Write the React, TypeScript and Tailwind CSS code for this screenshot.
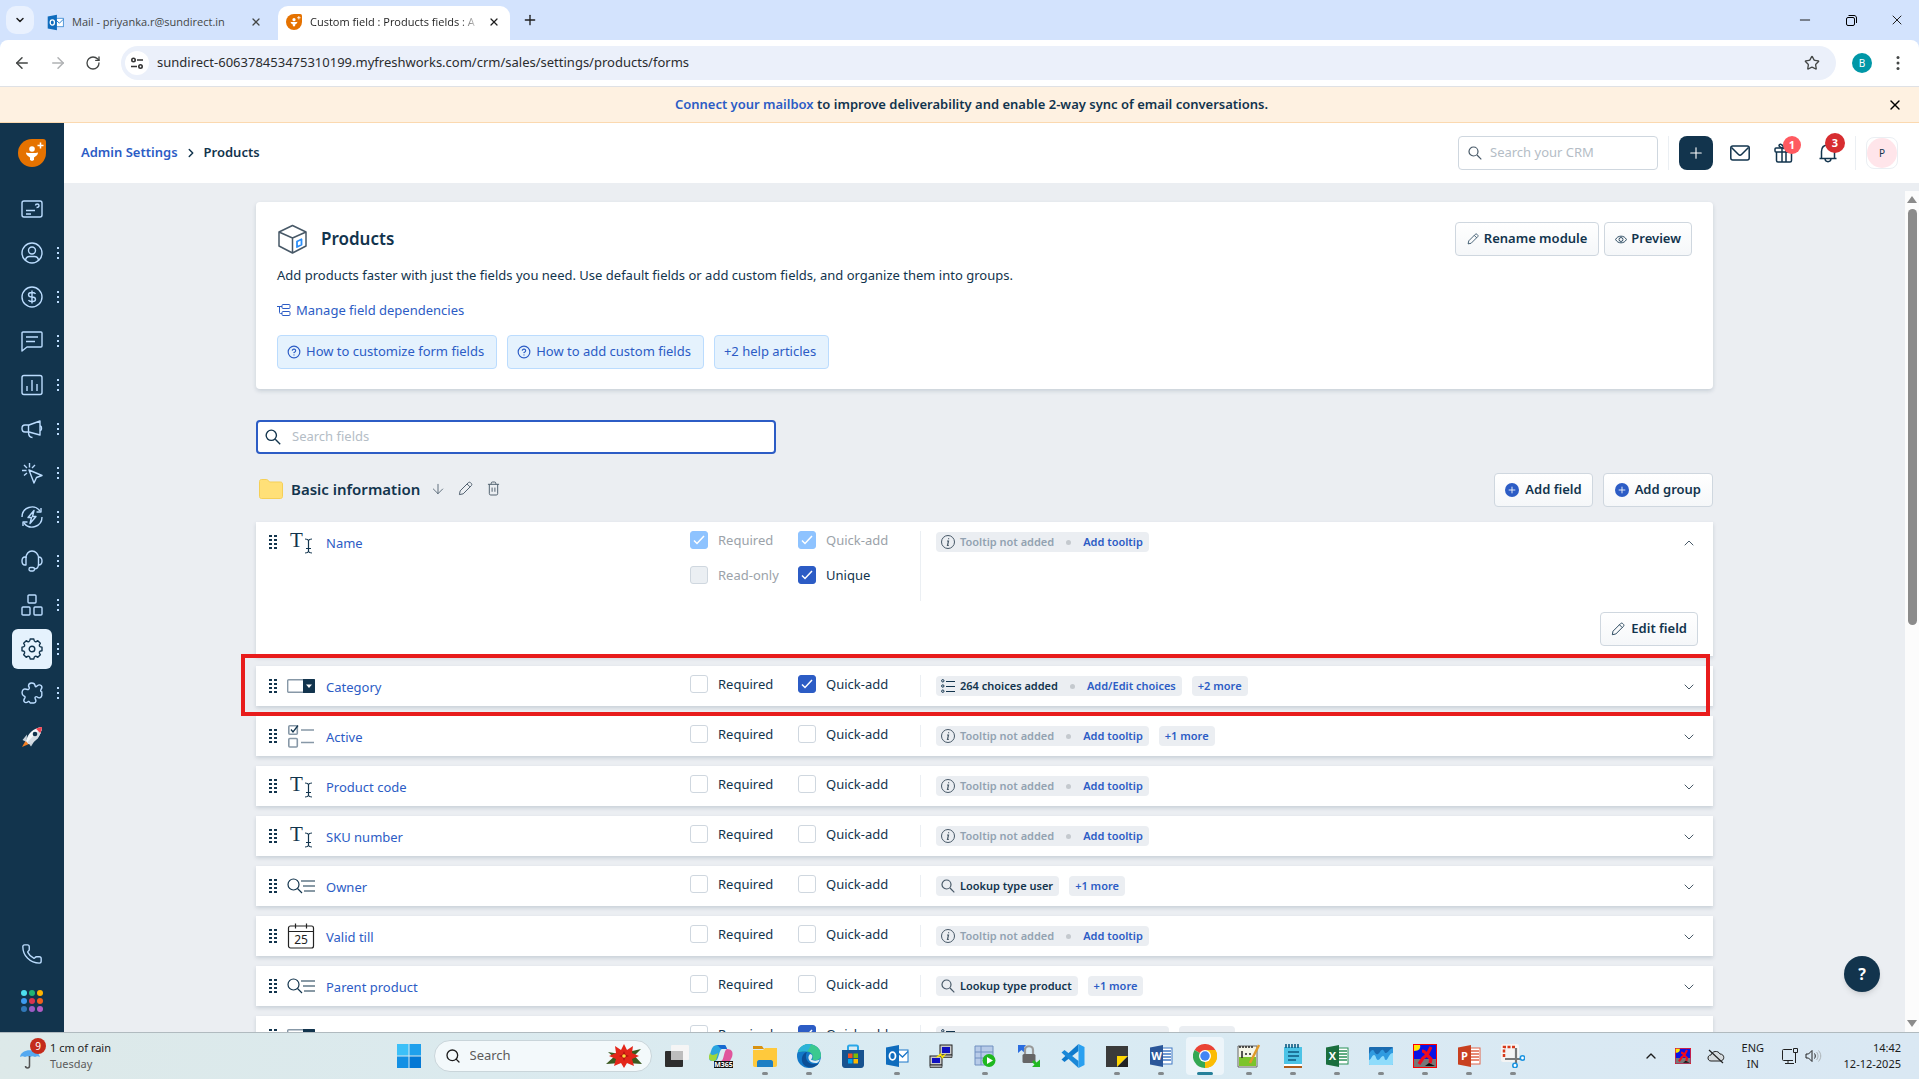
import React from 'react';
import {
  ArrowDown,
  ArrowLeft,
  ArrowRight,
  ChevronDown,
  ChevronRight,
  ChevronUp,
  CircleHelp,
  Minus,
  Phone,
  Plus,
  RotateCw,
  Search,
  Star,
  X
} from 'lucide-react';

type IconProps = { className?: string };

/* ---------- small shared icons ---------- */

function FreshLogo({ className }: IconProps) {
  return (
    <svg viewBox="0 0 28 28" className={className}>
      <path d="M14 0h11a3 3 0 0 1 3 3v11A14 14 0 1 1 14 0Z" fill="#e57200" />
      <circle cx="14" cy="10" r="2.800" fill="#fff" />
      <path d="M8 13.500c2 .8 10 .8 12 0 0 2-1.500 3.500-4 5v2.500L14 22l-2-1v-2.500c-2.500-1.500-4-3-4-5Z" fill="#fff" />
      <path d="M22.500 3.500v6M19.500 6.500h6" stroke="#fff" strokeWidth="1.500" />
    </svg>
  );
}

function OutlookIcon({ className }: IconProps) {
  return (
    <svg viewBox="0 0 24 24" className={className}>
      <rect x="11" y="6" width="12" height="12" fill="#fff" stroke="#1b76c9" />
      <path d="m12 8 5.500 5L23 7.500" fill="none" stroke="#1b76c9" strokeWidth="1.300" />
      <path d="M1 3.500 14 1v22L1 20.500Z" fill="#0f6cbd" />
      <ellipse cx="7.500" cy="12" rx="3" ry="3.800" fill="none" stroke="#fff" strokeWidth="1.800" />
    </svg>
  );
}

function SearchIcon({ className }: IconProps) {
  return (
    <svg viewBox="0 0 14 14" fill="none" stroke="currentColor" strokeWidth="1.200" className={className}>
      <circle cx="5.500" cy="5.500" r="4.500" />
      <path d="m9 9 4.300 4.300" />
    </svg>
  );
}

function EyeIcon({ className }: IconProps) {
  return (
    <svg viewBox="0 0 14 10" fill="none" stroke="currentColor" className={className}>
      <path d="M.7 5C3-.2 11-.2 13.300 5 11 10.200 3 10.200.7 5Z" />
      <circle cx="7" cy="5" r="2.300" />
    </svg>
  );
}

function PencilIcon({ className }: IconProps) {
  return (
    <svg viewBox="0 0 16 16" fill="none" stroke="currentColor" strokeLinejoin="round" className={className}>
      <path d="m1.500 14.500.8-4L11 1.800c.7-.7 1.700-.7 2.400 0l.8.8c.7.7.7 1.700 0 2.400L5.500 13.700l-4 .8ZM9.700 3.200l3.100 3.100" />
    </svg>
  );
}

function TrashIcon({ className }: IconProps) {
  return (
    <svg viewBox="0 0 14 16" fill="none" stroke="currentColor" className={className}>
      <path d="M1 3.500h12M4.500 3.500v-1c0-1 .5-1.500 1.500-1.500h2c1 0 1.500.5 1.500 1.500v1M2.500 3.500v10c0 1 .5 1.500 1.500 1.500h6c1 0 1.500-.5 1.500-1.500v-10M5.500 7v4.500M8.500 7v4.500" />
    </svg>
  );
}

function DependencyIcon({ className }: IconProps) {
  return (
    <svg viewBox="0 0 14 12" fill="none" stroke="currentColor" className={className}>
      <path d="M0 2.500h5M2.500 2.500v6c0 .7.300 1 1 1H5" />
      <rect x="5" y=".5" width="8" height="4" rx="1" />
      <rect x="5" y="7.500" width="8" height="4" rx="1" />
    </svg>
  );
}

function BoxIcon() {
  return (
    <svg viewBox="0 0 30 30" fill="none" stroke="#475867" strokeWidth="1.500" strokeLinejoin="round" className="size-[30px]">
      <path d="M15.500 1.500 29 8v14l-13.500 7L2 22V8l13.500-6.500ZM2 8l13.500 6L29 8M15.500 14v15" />
      <path d="m20 17.500 4.500-2.200v5.500L20 23v-5.500Z" stroke="#2c8ef8" strokeWidth="1.800" />
    </svg>
  );
}

function FolderIcon() {
  return (
    <svg viewBox="0 0 24 20" className="h-5 w-6">
      <path d="M.5 2.500c0-1.200.8-2 2-2h5c.8 0 1.200.3 1.700 1L10.500 3h11c1.200 0 2 .8 2 2v12.500c0 1.200-.8 2-2 2h-19c-1.200 0-2-.8-2-2v-15Z" fill="#ffe078" stroke="#f5cf57" />
    </svg>
  );
}

function DragIcon() {
  return (
    <svg viewBox="0 0 8 14" className="h-[14px] w-2" fill="#12344d">
      {[0, 4, 8, 12].map((y) => (
        <React.Fragment key={y}>
          <rect x="0" y={y} width="3" height="2" />
          <rect x="5" y={y} width="3" height="2" />
        </React.Fragment>
      ))}
    </svg>
  );
}

function InfoIcon() {
  return (
    <svg viewBox="0 0 14 14" fill="none" stroke="#475867" className="size-[14px]">
      <circle cx="7" cy="7" r="6.500" />
      <path d="M6 6h1.500l-1 4.500h1.300M7.600 3.300v1" strokeWidth="1.200" />
    </svg>
  );
}

function ListIcon() {
  return (
    <svg viewBox="0 0 14 14" fill="none" stroke="#12344d" className="size-[14px]">
      <circle cx="1.800" cy="1.800" r="1.200" />
      <circle cx="1.800" cy="7" r="1.200" />
      <circle cx="1.800" cy="12.200" r="1.200" />
      <path d="M5 2.500h9M5 7.500h9M5 12.500h9" />
    </svg>
  );
}

/* ---------- field type icons ---------- */

type FieldKind = 'text' | 'dropdown' | 'checkbox' | 'lookup' | 'date';

function FieldIcon({ kind }: { kind: FieldKind }) {
  switch (kind) {
    case 'text':
      return (
        <svg viewBox="0 0 28 24" fill="none" stroke="#12344d" className="h-6 w-7">
          <text x="3" y="17" fontSize="21" fontFamily="Liberation Serif" fill="#12344d" stroke="none">
            T
          </text>
          <path d="M18 9c2 0 3 .5 3.500 1.500C22 9.500 23 9 25 9M21.500 10.500v11M18 23c2 0 3-.5 3.500-1.500.5 1 1.500 1.500 3.500 1.500M19 18.500h5" strokeWidth="1.200" />
        </svg>
      );
    case 'dropdown':
      return (
        <svg viewBox="0 0 28 14" className="h-[14px] w-7">
          <rect x=".7" y=".7" width="26.600" height="12.600" rx="1" fill="#fff" stroke="#8798a7" strokeWidth="1.400" />
          <path d="M16 0h11c.6 0 1 .4 1 1v12c0 .6-.4 1-1 1H16Z" fill="#12344d" />
          <path d="M19 5.500h6l-3 3.500Z" fill="#fff" />
        </svg>
      );
    case 'checkbox':
      return (
        <svg viewBox="0 0 28 24" fill="none" stroke="#8798a7" strokeWidth="1.600" className="h-6 w-7">
          <rect x="1.800" y="1.800" width="8.500" height="8.500" rx="1" />
          <rect x="1.800" y="14.500" width="8.500" height="8.500" rx="1" />
          <path d="M14 6h13M14 18.500h13" />
          <path d="m4 5.500 2 2.500 5-6.500" stroke="#12344d" strokeWidth="1.300" />
        </svg>
      );
    case 'lookup':
      return (
        <svg viewBox="0 0 28 16" fill="none" stroke="#12344d" strokeWidth="1.200" className="h-4 w-7">
          <circle cx="6.500" cy="6.500" r="5.500" />
          <path d="m10.500 10.500 4.500 4.500M14 3h14M16 8h12M17 13h11" />
        </svg>
      );
    case 'date':
      return (
        <svg viewBox="0 0 28 28" fill="none" stroke="#222" strokeWidth="1.200" className="size-7">
          <rect x="1.500" y="4" width="25" height="22" rx="2" />
          <path d="M1.500 9.500h25M8.500 1.500v5M19.500 1.500v5" />
          <text x="14" y="22" textAnchor="middle" fontSize="12" fontFamily="Noto Sans" fill="#222" stroke="none">
            25
          </text>
        </svg>
      );
  }
}

/* ---------- form controls ---------- */

type CheckProps = { label: string; checked?: boolean; disabled?: boolean };

function Check({ label, checked = false, disabled = false }: CheckProps) {
  return (
    <label className="flex h-[18px] items-center gap-[10px] text-[13px] text-[#12344d] has-disabled:text-[#9ba2a9]">
      <span className="grid size-[18px] place-items-center">
        <input
          type="checkbox"
          defaultChecked={checked}
          disabled={disabled}
          className="peer col-start-1 row-start-1 size-[18px] appearance-none rounded-[3px] border border-[#cfd7df] bg-white checked:border-[#2c5cc5] checked:bg-[#2c5cc5] disabled:bg-[#ebeff3] disabled:checked:border-[#8ec3ff] disabled:checked:bg-[#8ec3ff]"
        />
        <svg viewBox="0 0 14 14" className="pointer-events-none col-start-1 row-start-1 hidden size-[14px] peer-checked:block" fill="none" stroke="#fff" strokeWidth="1.500">
          <path d="m2 7.500 3 3L12 3" />
        </svg>
      </span>
      <span className="pt-[2px]">{label}</span>
    </label>
  );
}

function Button({ children, className = '' }: { children: React.ReactNode; className?: string }) {
  return (
    <button
      className={`flex h-[34px] items-center rounded-[4px] border border-[#cfd7df] bg-linear-to-b from-white to-[#f5f7f9] text-[13px] font-semibold whitespace-nowrap text-[#12344d] ${className}`}
    >
      {children}
    </button>
  );
}

function AddBadge() {
  return (
    <span className="grid size-[14px] place-items-center rounded-full bg-[#2c5cc5] text-white">
      <Plus className="size-[10px]" />
    </span>
  );
}

/* ---------- field rows ---------- */

type Field = {
  name: string;
  kind: FieldKind;
  chip: 'tooltip' | 'choices' | 'lookup';
  chipText?: string;
  more?: string;
  quickAdd?: boolean;
  highlighted?: boolean;
};

const fields: Field[] = [
  { name: 'Category', kind: 'dropdown', chip: 'choices', chipText: '264 choices added', more: '+2 more', quickAdd: true, highlighted: true },
  { name: 'Active', kind: 'checkbox', chip: 'tooltip', more: '+1 more' },
  { name: 'Product code', kind: 'text', chip: 'tooltip' },
  { name: 'SKU number', kind: 'text', chip: 'tooltip' },
  { name: 'Owner', kind: 'lookup', chip: 'lookup', chipText: 'Lookup type user', more: '+1 more' },
  { name: 'Valid till', kind: 'date', chip: 'tooltip' },
  { name: 'Parent product', kind: 'lookup', chip: 'lookup', chipText: 'Lookup type product', more: '+1 more' },
  { name: 'Pricing type', kind: 'dropdown', chip: 'choices', chipText: '2 choices added', more: '+2 more', quickAdd: true }
];

function Chips({ chip, chipText, more }: Pick<Field, 'chip' | 'chipText' | 'more'>) {
  return (
    <div className="flex h-5 gap-[10px] text-[11px] font-semibold whitespace-nowrap">
      <div className="flex items-center rounded-[4px] bg-[#ebeef2] pr-[6px] pl-[5px]">
        {chip === 'tooltip' && <InfoIcon />}
        {chip === 'choices' && <ListIcon />}
        {chip === 'lookup' && <SearchIcon className="size-[14px] text-[#475867]" />}
        <span className={chip === 'tooltip' ? 'ml-[5px] text-[#92a2b1]' : 'ml-[5px] text-[#12344d]'}>
          {chip === 'tooltip' ? 'Tooltip not added' : chipText}
        </span>
        {chip !== 'lookup' && (
          <>
            <span className="mx-3 size-[5px] rounded-full bg-[#c4c9ce]" />
            <a href="#" className="text-[#2c5cc5]">
              {chip === 'tooltip' ? 'Add tooltip' : 'Add/Edit choices'}
            </a>
          </>
        )}
      </div>
      {more && <button className="rounded-[4px] bg-[#ebeef2] px-[6px] text-[#2c5cc5]">{more}</button>}
    </div>
  );
}

function FieldName({ name, kind }: Pick<Field, 'name' | 'kind'>) {
  return (
    <div className="flex h-10 items-center pl-[13px]">
      <DragIcon />
      <span className="mr-[11px] ml-[10px] flex w-7 justify-center">
        <FieldIcon kind={kind} />
      </span>
      <a href="#" className="pt-[3px] text-[13px] text-[#2c5cc5]">
        {name}
      </a>
    </div>
  );
}

const rowGrid = 'grid grid-cols-[434px_230px_1fr_auto] items-start';
const rowCard = 'bg-white shadow-[0_2px_4px_rgba(18,52,77,0.16)]';

function FieldRow({ field }: { field: Field }) {
  return (
    <li className={`relative ${rowCard}`}>
      <div className={rowGrid}>
        <FieldName name={field.name} kind={field.kind} />
        <div className="grid grid-cols-[108px_1fr] pt-[9px]">
          <Check label="Required" />
          <Check label="Quick-add" checked={field.quickAdd} />
        </div>
        <div className="mt-[9px] h-[22px] border-l border-[#ebeff3] pt-px pl-[15px]">
          <Chips chip={field.chip} chipText={field.chipText} more={field.more} />
        </div>
        <button aria-label={`Expand ${field.name}`} className="mt-[13px] mr-4 text-[#475867]">
          <ChevronDown className="size-4" strokeWidth={1.5} />
        </button>
      </div>
      {field.highlighted && (
        <div className="pointer-events-none absolute -top-3 right-[3px] -bottom-[10px] -left-[15px] z-10 border-4 border-[#e81c1c]" />
      )}
    </li>
  );
}

function NameRow() {
  return (
    <li className={rowCard}>
      <div className={rowGrid}>
        <FieldName name="Name" kind="text" />
        <div className="grid grid-cols-[108px_1fr] gap-y-[17px] pt-[9px]">
          <Check label="Required" checked disabled />
          <Check label="Quick-add" checked disabled />
          <Check label="Read-only" disabled />
          <Check label="Unique" checked />
        </div>
        <div className="mt-[9px] h-[70px] border-l border-[#ebeff3] pt-px pl-[15px]">
          <Chips chip="tooltip" />
        </div>
        <button aria-label="Collapse Name" className="mt-[13px] mr-4 text-[#475867]">
          <ChevronUp className="size-4" strokeWidth={1.5} />
        </button>
      </div>
      <div className="flex justify-end pt-[11px] pr-[15px] pb-[10px]">
        <Button className="gap-[6px] px-[10px]">
          <PencilIcon className="size-[14px]" />
          Edit field
        </Button>
      </div>
    </li>
  );
}

/* ---------- browser chrome ---------- */

function TabStrip() {
  return (
    <div className="flex h-10 items-end bg-[#d3e3fd] font-['Open_Sans',sans-serif] text-[11px] text-[#1f1f1f]">
      <button aria-label="Search tabs" className="mb-[6px] ml-[6px] grid size-7 place-items-center rounded-[10px] bg-[#e9f1fe]">
        <ChevronDown className="size-3" strokeWidth={3} />
      </button>
      <div className="ml-3 flex h-[34px] w-[224px] items-center gap-2 pb-[2px] text-[#444746]">
        <OutlookIcon className="ml-px size-[17px]" />
        <span className="flex-1 whitespace-nowrap">Mail - priyanka.r@sundirect.in</span>
        <button aria-label="Close Mail tab" className="mr-2">
          <X className="size-3" strokeWidth={2.5} />
        </button>
      </div>
      <div className="ml-2 flex h-[34px] w-[232px] items-center gap-2 rounded-t-[10px] bg-white px-2 pb-[2px]">
        <FreshLogo className="size-4 shrink-0" />
        <span className="min-w-0 flex-1 overflow-hidden mask-[linear-gradient(to_right,black_88%,transparent)] whitespace-nowrap">
          Custom field : Products fields : A
        </span>
        <button aria-label="Close Custom field tab" className="mr-[2px]">
          <X className="size-3" strokeWidth={2.5} />
        </button>
      </div>
      <button aria-label="New tab" className="mb-3 ml-3">
        <Plus className="size-4" />
      </button>
      <div className="mb-3 ml-auto flex items-center gap-[30px] pr-[14px]">
        <button aria-label="Minimize">
          <Minus className="size-4" strokeWidth={1.5} />
        </button>
        <button aria-label="Restore">
          <svg viewBox="0 0 16 16" className="size-4" fill="none" stroke="#000">
            <rect x="3.500" y="5.500" width="8" height="8" rx="1.500" />
            <path d="M5.500 3.500h5.500c1.500 0 2.500 1 2.500 2.500V11" />
          </svg>
        </button>
        <button aria-label="Close window">
          <X className="size-4" strokeWidth={1.5} />
        </button>
      </div>
    </div>
  );
}

function AddressBar() {
  return (
    <div className="bg-[#d3e3fd]">
      <div className="flex h-[46px] items-center rounded-t-lg bg-white text-[#444746]">
        <button aria-label="Back" className="ml-[13px]">
          <ArrowLeft className="size-[18px]" />
        </button>
        <button aria-label="Forward" className="ml-[18px] text-[#b0b2b4]">
          <ArrowRight className="size-[18px]" />
        </button>
        <button aria-label="Reload" className="ml-[18px]">
          <RotateCw className="size-4" />
        </button>
        <div className="ml-5 flex h-[34px] flex-1 items-center rounded-full bg-[#ebf0fa] pr-4 pl-1">
          <span className="grid size-6 place-items-center rounded-full bg-white">
            <svg viewBox="0 0 14 14" className="size-[14px]" fill="none" stroke="#333" strokeWidth="1.600">
              <circle cx="3.500" cy="4" r="1.700" />
              <circle cx="10.500" cy="10.500" r="1.700" />
              <path d="M7 4h6M1 10.500h6" />
            </svg>
          </span>
          <input
            aria-label="Address"
            defaultValue="sundirect-606378453475310199.myfreshworks.com/crm/sales/settings/products/forms"
            className="ml-2 flex-1 bg-transparent text-[13px] text-[#2a2c2e] outline-none"
          />
          <button aria-label="Bookmark">
            <Star className="size-4" />
          </button>
        </div>
        <span className="ml-4 grid size-5 place-items-center rounded-full bg-[#0097a7] text-[10px] text-white">B</span>
        <button aria-label="Browser menu" className="mr-[13px] ml-[18px]">
          <svg viewBox="0 0 16 16" className="size-4" fill="#444746">
            <circle cx="8" cy="2.500" r="1.500" />
            <circle cx="8" cy="8" r="1.500" />
            <circle cx="8" cy="13.500" r="1.500" />
          </svg>
        </button>
      </div>
    </div>
  );
}

/* ---------- app shell ---------- */

const navItems = [
  { label: 'Activities', menu: false, paths: ['M4 4h16c1.200 0 2 .8 2 2v12c0 1.200-.8 2-2 2H4c-1.200 0-2-.8-2-2V6c0-1.200.8-2 2-2Z', 'M6 13.500h9M6 17h5M15.500 8.500c0-2 3.500-2 3.500 0s-2.500 2-2.500 2'] },
  { label: 'Contacts', menu: true, paths: ['M12 2a10 10 0 1 0 0 20 10 10 0 0 0 0-20Z', 'M12 6a3.500 3.500 0 1 0 0 7 3.500 3.500 0 0 0 0-7Z', 'M5.500 19c.5-2.500 2-3.500 4-3.500h5c2 0 3.500 1 4 3.500'] },
  { label: 'Deals', menu: true, paths: ['M12 2a10 10 0 1 0 0 20 10 10 0 0 0 0-20Z', 'M15.500 9c-.5-1-1.500-1.500-3-1.500h-1c-1.500 0-3 .7-3 2.200S9.500 12 12 12s3.500.8 3.500 2.300-1.500 2.200-3 2.200h-1c-1.500 0-2.500-.5-3-1.500M12 5.500v13'] },
  { label: 'Conversations', menu: true, paths: ['M2 4c0-.6.4-1 1-1h18c.6 0 1 .4 1 1v13c0 .6-.4 1-1 1H7l-5 4Z', 'M6 8h12M6 12.500h9'] },
  { label: 'Reports', menu: true, paths: ['M4 2.500h16c1.200 0 2 .8 2 2v15c0 1.200-.8 2-2 2H4c-1.200 0-2-.8-2-2v-15c0-1.200.8-2 2-2Z', 'M7 13v5M12 7v11M17 11v7'] },
  { label: 'Marketing', menu: true, paths: ['M9 8H5c-2 0-3 1.500-3 3.500S3 15 5 15h4l11 3V4L9 8Z', 'M8.500 8v7M8.500 15c0 3 1 5.500 4 5.500M20 9c2 0 2 4.500 0 4.500'] },
  { label: 'Campaigns', menu: true, paths: ['m9 9 13 5.500-5.500 2L14 22Z', 'M9.500 2v4.500M2 9.500h4.500M4 4l3 3M15 4l-3 3M4 14.500l3-2.500'] },
  { label: 'Automations', menu: true, paths: ['M2 12A10 10 0 0 1 20 6M22 12A10 10 0 0 1 4 18', 'M21 3v4h-4.500M3 21v-4h4.500', 'm14 5.500-6 7h3.500l-1.500 6 6-7h-3.500Z'] },
  { label: 'Support', menu: true, paths: ['M6 9c0-4 2.500-7 6-7s6.500 3 6.500 7v6c0 3-1.500 5-4 5', 'M6 8H5C3 8 2 9.500 2 12s1 4 3 4h1ZM18.500 8c2 0 3.500 1.500 3.500 4s-1.500 4-3.500 4', 'M10.500 18.500h2.500c2 0 2 3.500 0 3.500h-2.500c-2 0-2-3.500 0-3.500Z'] },
  { label: 'Modules', menu: true, paths: ['M9 2h6c.6 0 1 .4 1 1v6c0 .6-.4 1-1 1H9c-.6 0-1-.4-1-1V3c0-.6.4-1 1-1Z', 'M3 14h6c.6 0 1 .4 1 1v6c0 .6-.4 1-1 1H3c-.6 0-1-.4-1-1v-6c0-.6.4-1 1-1Z', 'M15 14h6c.6 0 1 .4 1 1v6c0 .6-.4 1-1 1h-6c-.6 0-1-.4-1-1v-6c0-.6.4-1 1-1Z'] },
  { label: 'Admin Settings', menu: true, active: true, paths: ['M10.200 2h3.600Q14.300 6.400 17.800 3.660L20.340 6.200Q17.600 9.700 22 10.200v3.600Q17.600 14.300 20.340 17.800L17.800 20.340Q14.300 17.600 13.800 22h-3.600Q9.700 17.600 6.200 20.340L3.660 17.800Q6.400 14.300 2 13.800v-3.600Q6.400 9.700 3.660 6.200L6.200 3.660Q9.700 6.400 10.200 2Z', 'M12 9.200a2.800 2.800 0 1 0 0 5.600 2.800 2.800 0 0 0 0-5.600Z'] },
  { label: 'Marketplace', menu: true, paths: ['M8.500 5c0-4 6-4 6.500-.5.3 1.500 1 1.500 2 .5 3-2.500 6.500 0 4 3.500-.8 1-.3 2 .8 2.500v3.500c-.5 2.500-3 3-4.500 1.500-1.500-1-3 .5-2 2s1 3.500-1.500 4h-3.500c-.8-.5-.8-2-2-1.500-3 2.500-6 0-3.500-3.500.8-1.200 0-2-1-2-2.500-1.500-2-5-.5-6.500 2-1.500 3.500.5 5 0s1.200-2 .2-3.500Z'] }
];

function Rocket() {
  return (
    <svg viewBox="0 0 24 24" className="size-6">
      <path d="m6 15-4 7 7-3Z" fill="#f48024" />
      <path d="M7 9.500 2.500 15l4 2ZM14.500 16 11 21.500l-3-4Z" fill="#c9d2da" />
      <path d="M6 16C7.500 9 13 3 22 2c-1 9-6 15-13.500 17Z" fill="#f4f7fa" />
      <path d="M22 2C21 11 16 17 8.500 19L7 17.500Z" fill="#d5dde4" />
      <path d="M22 2c-2 .2-4.500 1-6 1.800l4.200 4.200C21.500 6 21.800 4 22 2Z" fill="#f2414f" />
      <circle cx="15" cy="9" r="2.300" fill="#12344d" />
    </svg>
  );
}

const appColors = ['#4de0f0', '#22b573', '#ffb400', '#3d9bf0', '#d9334f', '#f2601d', '#3178b8', '#9a5cc4', '#b45cc4'];

function Sidebar() {
  return (
    <nav className="flex w-16 shrink-0 flex-col bg-[#12344d] text-[#bbdcfe]">
      <a href="#" aria-label="Home" className="mt-4 mb-5 flex justify-center">
        <FreshLogo className="size-7" />
      </a>
      <ul>
        {navItems.map((item) => (
          <li key={item.label} className="flex h-11 items-center">
            <a
              href="#"
              aria-label={item.label}
              className={`ml-3 grid size-10 place-items-center rounded-md ${item.active ? 'bg-[#e5f2fd] text-[#12344d]' : ''}`}
            >
              <svg viewBox="0 0 24 24" className="size-6" fill="none" stroke="currentColor" strokeWidth="1.400" strokeLinejoin="round">
                {item.paths.map((d) => (
                  <path key={d} d={d} />
                ))}
              </svg>
            </a>
            {item.menu && (
              <svg viewBox="0 0 2 12" className="ml-[5px] h-3 w-[2px]" fill="#bbdcfe">
                <rect width="2" height="2" />
                <rect y="5" width="2" height="2" />
                <rect y="10" width="2" height="2" />
              </svg>
            )}
          </li>
        ))}
        <li className="flex h-11 items-center justify-center">
          <a href="#" aria-label="Get started">
            <Rocket />
          </a>
        </li>
      </ul>
      <a href="#" aria-label="Phone" className="mt-auto flex justify-center">
        <Phone className="size-[22px]" strokeWidth={1.5} />
      </a>
      <a href="#" aria-label="Switch app" className="mt-[25px] mb-[20px] flex justify-center">
        <span className="grid grid-cols-3 gap-[2px]">
          {appColors.map((color) => (
            <span key={color} className="size-[6px] rounded-full" style={{ backgroundColor: color }} />
          ))}
        </span>
      </a>
    </nav>
  );
}

function Header() {
  return (
    <header className="flex h-[60px] shrink-0 items-center bg-white pr-[21px] pl-[17px] text-[#12344d]">
      <div className="flex items-center text-[13px] font-semibold">
        <a href="#" className="text-[#2c5cc5]">
          Admin Settings
        </a>
        <ChevronRight className="mx-[6px] size-[14px]" strokeWidth={2.5} />
        <span>Products</span>
      </div>
      <label className="ml-auto flex h-[34px] w-[200px] items-center gap-2 rounded-[4px] border border-[#cfd7df] px-[9px]">
        <SearchIcon className="size-[14px] shrink-0 text-[#475867]" />
        <input
          type="search"
          aria-label="Search your CRM"
          placeholder="Search your CRM"
          className="min-w-0 flex-1 text-[13px] outline-none placeholder:text-[#b4bdc6]"
        />
      </label>
      <span className="mx-[10px] h-[34px] w-px bg-[#ebeff3]" />
      <button aria-label="Add" className="grid size-[34px] place-items-center rounded-lg bg-[#12344d] text-white">
        <Plus className="size-[18px]" strokeWidth={1.5} />
      </button>
      <button aria-label="Mail" className="ml-[17px]">
        <svg viewBox="0 0 20 16" className="h-4 w-5" fill="none" stroke="currentColor" strokeWidth="1.500" strokeLinejoin="round">
          <rect x=".8" y="1" width="18.400" height="14" rx="2" />
          <path d="m1.500 2.500 7 7c1 1 2 1 3 0l7-7" />
        </svg>
      </button>
      <button aria-label="Rewards" className="relative ml-6">
        <svg viewBox="0 0 20 20" className="size-5" fill="none" stroke="currentColor" strokeWidth="1.500">
          <rect x="1" y="5" width="18" height="4" rx="1" />
          <path d="M2.500 9v8.500c0 1 .5 1.500 1.500 1.500h12c1 0 1.500-.5 1.500-1.500V9M8 5v14M12 5v14M10 5C8 5 5 4 5 2.500S8 0 10 5c2-5 5-4 5-2.500S12 5 10 5Z" />
        </svg>
        <span className="absolute -top-[7px] left-[9px] grid size-[18px] place-items-center rounded-full bg-[#ff5a60] text-[11px] font-bold text-white">1</span>
      </button>
      <button aria-label="Notifications" className="relative ml-6">
        <svg viewBox="0 0 20 20" className="size-5" fill="none" stroke="currentColor" strokeWidth="1.500">
          <path d="M1.500 15.500h17M3.500 15.500V8.500C3.500 4.500 6 2 10 2s6.500 2.500 6.500 6.500v7M7 16c.5 3.500 5.500 3.500 6 0" />
        </svg>
        <span className="absolute -top-[10px] left-[7px] grid size-5 place-items-center rounded-full bg-[#d72d30] text-[11px] font-bold text-white">3</span>
      </button>
      <span className="mr-[10px] ml-[17px] h-[34px] w-px bg-[#ebeff3]" />
      <button className="grid size-8 place-items-center rounded-lg border border-[#ebeff3]">
        <span className="grid size-[30px] place-items-center rounded-full bg-[#ffe5ea] text-[10px]">P</span>
      </button>
    </header>
  );
}

const helpLink = 'flex h-[34px] items-center gap-[5px] rounded-[4px] border border-[#bbdcfe] bg-[#e5f2fd] pr-3 pl-[9px]';

function ModuleCard() {
  return (
    <section className="rounded-[4px] bg-white px-[21px] py-5 text-[13px] shadow-[0_2px_4px_rgba(18,52,77,0.16)]">
      <div className="flex items-center">
        <BoxIcon />
        <h1 className="ml-[14px] text-[17px] font-semibold">Products</h1>
        <Button className="ml-auto gap-[5px] px-[11px]">
          <PencilIcon className="size-3" />
          Rename module
        </Button>
        <Button className="ml-[5px] gap-1 px-[10px]">
          <EyeIcon className="h-[9px] w-3" />
          Preview
        </Button>
      </div>
      <p className="mt-[9px] mb-[15px] leading-5">
        Add products faster with just the fields you need. Use default fields or add custom fields, and organize them into groups.
      </p>
      <a href="#" className="flex items-center gap-[5px] leading-5 text-[#2c5cc5]">
        <DependencyIcon className="h-3 w-[14px]" />
        Manage field dependencies
      </a>
      <div className="mt-[15px] flex gap-[10px] text-[#2c5cc5]">
        <a href="#" className={helpLink}>
          <CircleHelp className="size-[14px]" />
          How to customize form fields
        </a>
        <a href="#" className={helpLink}>
          <CircleHelp className="size-[14px]" />
          How to add custom fields
        </a>
        <button className={helpLink}>+2 help articles</button>
      </div>
    </section>
  );
}

function Content() {
  return (
    <main className="min-w-0 flex-1 overflow-hidden px-6 pt-[19px]">
      <div className="mx-auto max-w-[1457px]">
        <ModuleCard />
        <label className="mt-[31px] flex h-[34px] w-[520px] items-center gap-[11px] rounded-[4px] border-2 border-[#2c5cc5] bg-white px-[7px]">
          <SearchIcon className="size-4 text-[#12344d]" />
          <input aria-label="Search fields" placeholder="Search fields" className="flex-1 text-[13px] outline-none placeholder:text-[#b4bdc6]" />
        </label>
        <div className="mt-[19px] flex items-center pl-[3px] text-[#475867]">
          <div className="flex items-center pb-[3px]">
            <FolderIcon />
            <h2 className="ml-2 text-[15px] leading-5 font-semibold text-[#12344d]">Basic information</h2>
            <button aria-label="Move down" className="ml-[10px]">
              <ArrowDown className="size-4" strokeWidth={1.25} />
            </button>
            <button aria-label="Rename group" className="ml-3">
              <PencilIcon className="size-[15px]" />
            </button>
            <button aria-label="Delete group" className="ml-[14px]">
              <TrashIcon className="h-[15px] w-[13px]" />
            </button>
          </div>
          <Button className="ml-auto gap-[6px] px-[10px]">
            <AddBadge />
            Add field
          </Button>
          <Button className="ml-[10px] gap-[6px] px-[11px]">
            <AddBadge />
            Add group
          </Button>
        </div>
        <ul className="mt-[15px] flex flex-col gap-[10px]">
          <NameRow />
          {fields.map((field) => (
            <FieldRow key={field.name} field={field} />
          ))}
        </ul>
      </div>
    </main>
  );
}

function Scrollbar() {
  return (
    <div className="mt-2 flex w-[14px] shrink-0 flex-col items-center bg-[#fcfcfc] pt-[5px] pb-1">
      <svg viewBox="0 0 10 8" className="h-2 w-[10px]" fill="#8b8b8b">
        <path d="M5 0 10 7H0Z" />
      </svg>
      <div className="mt-[5px] h-[50%] w-[9px] rounded-full bg-[#8b8b8b]" />
      <svg viewBox="0 0 10 8" className="mt-auto h-2 w-[10px]" fill="#8b8b8b">
        <path d="M5 7 10 0H0Z" />
      </svg>
    </div>
  );
}

/* ---------- taskbar ---------- */

function RunnerArt() {
  return (
    <>
      <rect x=".5" y=".5" width="23" height="23" fill="#0a14e6" stroke="#f00" />
      <path d="M1 15h22v8H1Z" fill="#777" />
      <path d="M1 1h6c1 3-1 6-6 6Z" fill="#ffe600" />
      <path d="M12 22h10l-6-3Z" fill="#111" />
      <path d="M9 7c3 0 4 2 5 4l4 4-1 4M18 3l-4 8-4 3-4 6" fill="none" stroke="#f00b1c" strokeWidth="3.200" />
    </>
  );
}

function OfficeArt({ letter, color, dark }: { letter: string; color: string; dark: string }) {
  return (
    <>
      <rect x="11" y="4" width="12" height="16" fill="#fff" stroke={color} />
      <path d="M14 7h8M14 10h8M14 13h8M14 16h8" stroke={color} strokeWidth="1.300" />
      <path d="M1 3.500 14 1v22L1 20.500Z" fill={dark} />
      <text x="7.500" y="16" textAnchor="middle" fontSize="11" fontWeight="700" fontFamily="Open Sans" fill="#fff">
        {letter}
      </text>
    </>
  );
}

const taskbarApps: { label: string; running?: boolean; active?: boolean; art: React.ReactNode }[] = [
  {
    label: 'Task View',
    art: (
      <>
        <rect x="0" y="7" width="18" height="16" rx="1" fill="#2d2d2d" />
        <rect x="6" y="1" width="18" height="15" rx="1" fill="#f5f5f5" />
        <rect x="6" y="7" width="12" height="9" fill="#bdbdbd" />
      </>
    )
  },
  {
    label: 'Microsoft 365 Copilot',
    art: (
      <>
        <path d="M8 1h7c2 0 2 2 3 4h-5c-3 0-3 12-7 12H3c-5 0-2-6-1-10 1-4 3-6 6-6Z" fill="#2aa5e0" />
        <path d="M1 9c1 3 5 2 8 0l-2 7c-3 2-8 1-7-4Z" fill="#9fd63c" />
        <path d="M13 5h4c4 0 8 1 6 8l-2 4h-9c3 0 3-12 6-12Z" fill="#e0559c" />
        <path d="M8 1h7c2 0 2 2 3 4h-5c-2 0-3-3-5-4Z" fill="#1769d1" />
        <rect x="5" y="17" width="19" height="7" fill="#111" />
        <text x="14.500" y="23" textAnchor="middle" fontSize="7" fontWeight="700" fontFamily="Open Sans" fill="#fff">
          M365
        </text>
      </>
    )
  },
  {
    label: 'File Explorer',
    running: true,
    art: (
      <>
        <path d="M0 2h9l2 3H0Z" fill="#d9920f" />
        <path d="M0 6h10l2-2h12v17c0 1-.5 2-2 2H2c-1.500 0-2-1-2-2Z" fill="#ffc93c" />
        <path d="M4 23v-5c0-1 1-2 2-2h12c1 0 2 1 2 2v5Z" fill="#1d7fc4" />
      </>
    )
  },
  {
    label: 'Edge',
    running: true,
    art: (
      <>
        <circle cx="12" cy="12" r="12" fill="#1278c8" />
        <path d="M1 8C3 2 9-1 15 .500c6 1.500 9 6 9 11 0 4-5 6-9 4 2-2 1-7-5-8-4-.5-7 .5-9 .5Z" fill="#3bc98f" />
        <path d="M1 8C3 2 9-1 14 .300c-1 3-2 5-4 7.200-4-.5-7 .5-9 .5Z" fill="#2bb3d9" />
        <path d="M10 8c-3 5 0 13 9 12 1 0 2-1 3-1-3 5-11 6-15 2S5 9 10 8Z" fill="#0c4f96" />
        <path d="M13 10c3 0 3 4 1 5.500 2 1.500 6 1.500 9 0-1 2-2 3-3 3.500-7 1-11-5-7-9Z" fill="#d9ebf3" />
      </>
    )
  },
  {
    label: 'Microsoft Store',
    art: (
      <>
        <path d="M7 7V3c0-1 .5-1.500 1.500-1.500h7c1 0 1.500.5 1.500 1.500v4" fill="none" stroke="#2aa7e8" strokeWidth="2" />
        <path d="M1 6h22v15c0 1.500-1 3-3 3H4c-2 0-3-1.500-3-3Z" fill="#17528f" />
        <rect x="7" y="9.500" width="4.500" height="4.500" fill="#f25022" />
        <rect x="12.500" y="9.500" width="4.500" height="4.500" fill="#7fba00" />
        <rect x="7" y="15" width="4.500" height="4.500" fill="#00a4ef" />
        <rect x="12.500" y="15" width="4.500" height="4.500" fill="#ffb900" />
      </>
    )
  },
  { label: 'Outlook', running: true, art: <OutlookIcon /> },
  {
    label: 'PuTTY',
    art: (
      <>
        <rect x="11" y="1" width="12" height="10" fill="#c9c9c9" stroke="#222" />
        <rect x="13" y="3" width="8" height="6" fill="#1010c0" />
        <rect x="1" y="12" width="12" height="9" fill="#c9c9c9" stroke="#222" />
        <rect x="3" y="14" width="8" height="5" fill="#1010c0" />
        <path d="M1 21h12v2.500H1ZM12 11h11v2.500H12Z" fill="#aaa" stroke="#222" strokeWidth=".7" />
        <path d="m6 14 6-5 1 3 5-3-5 6-1-3Z" fill="#ffe600" />
      </>
    )
  },
  {
    label: 'Database Runner',
    running: true,
    art: (
      <>
        <path d="M2 2h18v19H2Z" fill="#b7cbe8" stroke="#7090c0" />
        <path d="M2 8h18M2 14h18M8 2v19" stroke="#7090c0" />
        <circle cx="16" cy="16.500" r="6.500" fill="#1fb81f" />
        <path d="m14 13 6 3.500-6 3.500Z" fill="#fff" />
      </>
    )
  },
  {
    label: 'WinSCP',
    art: (
      <>
        <path d="M1 1h8L7 3.500l2 2-2.500 2.500-2-2L1 9Z" fill="#2a6de0" />
        <path d="M8 11V6c0-5 8-5 8 0v5" fill="none" stroke="#9a9a9a" strokeWidth="2.200" />
        <rect x="5.500" y="10" width="13" height="9" rx="1.500" fill="#666" />
        <path d="M23 23h-8l2.500-2.500-2.500-2.500 2-2 2.500 2.500 3.500-3Z" fill="#22b822" />
      </>
    )
  },
  {
    label: 'Visual Studio Code',
    art: (
      <>
        <path d="M17.500 0v7L3.500 18 .500 15.500Z" fill="#0f7acc" />
        <path d="M17.500 24v-7L3.500 6 .500 8.500Z" fill="#1a88d8" />
        <path d="m17.500 0 6 3v18l-6 3Z" fill="#2aa0f0" />
      </>
    )
  },
  {
    label: 'Sticky Notes',
    running: true,
    art: (
      <>
        <path d="M1 2h22v10H12v11H1Z" fill="#3a3a3a" />
        <path d="M12 12h11L12 23Z" fill="#ffd600" />
        <path d="M23 12v11H12Z" fill="#222" />
      </>
    )
  },
  { label: 'Word', running: true, art: <OfficeArt letter="W" color="#4178c4" dark="#2a5699" /> },
  {
    label: 'Chrome',
    active: true,
    art: (
      <>
        <path d="M12 12 1.600 6A12 12 0 0 1 22.400 6Z" fill="#ea4335" />
        <path d="M12 12 22.400 6A12 12 0 0 1 12 24Z" fill="#fbbc04" />
        <path d="M12 12 12 24A12 12 0 0 1 1.600 6Z" fill="#34a853" />
        <path d="M12 6h10.400A12 12 0 0 1 12 24l5.200-9Z" fill="#fbbc04" />
        <circle cx="12" cy="12" r="6" fill="#fff" />
        <circle cx="12" cy="12" r="4.700" fill="#4285f4" />
      </>
    )
  },
  {
    label: 'Notepad++',
    running: true,
    art: (
      <>
        <path d="M1 2h19v21H1Z" fill="#f5f5e8" stroke="#666" />
        <path d="M2 13h17v9H2Z" fill="#7cc42c" />
        <path d="M5 7v7M8 10h2M12 10h2M3 2v2M6 2v2M9 2v2M12 2v2M15 2v2" stroke="#222" strokeWidth="1.500" />
        <path d="m22 1-9 18" stroke="#e09b2b" strokeWidth="2.500" />
      </>
    )
  },
  {
    label: 'Notepad',
    running: true,
    art: (
      <>
        <path d="M3 3h18v18H3Z" fill="#4cc3e6" />
        <path d="M3 20h18v2H3Z" fill="#fff" />
        <path d="M3 22h18v2H3Z" fill="#b05c1a" />
        <path d="M5 0v4M8 0v4M11 0v4M14 0v4M17 0v4M7 8h11M7 12h11M7 16h8" stroke="#0d5a80" strokeWidth="1.600" />
      </>
    )
  },
  { label: 'Excel', running: true, art: <OfficeArt letter="X" color="#2b9158" dark="#1a6e3e" /> },
  {
    label: 'Performance Monitor',
    running: true,
    art: (
      <>
        <rect x="0" y="3" width="24" height="18" rx="1" fill="#1a6bb0" />
        <path d="M0 15c2 0 3-6 5-6s2 4 4 4 3-5 5-5 1 4 3 4 3-6 7-6v14c0 1-.5 1-1 1H1c-.5 0-1 0-1-1Z" fill="#8fdcfb" />
        <path d="M0 10c2-4 4-5 5-3s2 4 4 3 3-5 5-4 1 3 3 3 3-4 7-5v5c-4 0-5 7-7 7s-1-4-3-4-3 4-5 4-2-5-4-5-3 5-5 5Z" fill="#2f9be0" />
      </>
    )
  },
  { label: 'Runner', running: true, art: <RunnerArt /> },
  { label: 'PowerPoint', running: true, art: <OfficeArt letter="P" color="#e0654a" dark="#c8401f" /> },
  {
    label: 'Snipping Tool',
    running: true,
    art: (
      <>
        <rect x="0" y="0" width="18" height="18" rx="2" fill="#f4f4f4" />
        <path d="M3 13V3h11" fill="none" stroke="#d8391a" strokeWidth="2.500" strokeDasharray="3 1.500" />
        <path d="M15 4v15M4 15h15" stroke="#777" strokeWidth="2.200" />
        <circle cx="21.500" cy="14" r="2.200" fill="#fff" stroke="#1c94e0" strokeWidth="1.600" />
        <circle cx="14" cy="21.500" r="2.200" fill="#fff" stroke="#1c94e0" strokeWidth="1.600" />
      </>
    )
  }
];

function Taskbar() {
  return (
    <footer className="grid h-[47px] shrink-0 grid-cols-[1fr_auto_1fr] items-center border-t border-[#b0babf] bg-linear-to-r from-[#dde9e9] via-[#d9ebf3] to-[#dae8f3] text-[11px] text-[#1c1c1c]">
      <button className="flex items-center gap-[2px] pl-5 text-left leading-4">
        <span className="relative">
          <svg viewBox="0 0 28 32" className="h-8 w-7">
            <path d="M0 17C1 8 18 8 20 17c-2-1-3-1-5 0-2-1-3-1-5 0-2-1-3-1-5 0-2-1-3-1-5 0Z" fill="#55a9f0" />
            <path d="M9.500 16v10c0 2.500-4 2.500-4 0" fill="none" stroke="#555" strokeWidth="1.500" />
          </svg>
          <span className="absolute -top-[2px] left-[10px] grid size-4 place-items-center rounded-full bg-[#c42b1c] text-[10px] text-white">9</span>
        </span>
        <span>
          1 cm of rain
          <br />
          <span className="text-[#5c5c5c]">Tuesday</span>
        </span>
      </button>

      <div className="flex items-center pl-3">
        <button aria-label="Start" className="mr-[13px]">
          <svg viewBox="0 0 24 24" className="size-6">
            <path d="M0 0h11.500v11.500H0Z" fill="#3cc0f8" />
            <path d="M12.500 0H24v11.500H12.500Z" fill="#1fa0ec" />
            <path d="M0 12.500h11.500V24H0Z" fill="#1390e4" />
            <path d="M12.500 12.500H24V24H12.500Z" fill="#0478d4" />
          </svg>
        </button>
        <label className="mr-[3px] flex h-8 w-[218px] items-center gap-[9px] rounded-full border border-[#c9d5da] bg-[#f3f9fb] pr-[9px] pl-[10px]">
          <Search className="size-4 shrink-0" />
          <input aria-label="Search" placeholder="Search" className="min-w-0 flex-1 text-[13px] outline-none placeholder:text-[#5c5c5c]" />
          <svg viewBox="0 0 36 24" className="h-6 w-9 shrink-0">
            <path d="m0 20 11-10 4 9ZM36 20 25 8l-4 11ZM2 8l12 2-3 6ZM35 5 22 8l3 7Z" fill="#3b5a20" />
            <path d="m18 0 3 6 6-4-1 7 7 3-7 3 2 7-7-3-3 5-3-5-7 3 2-7-7-3 7-3-1-7 6 4Z" fill="#e3261a" />
            <path d="m18 7 1.500 3.500L23 12l-3.500 1.500L18 17l-1.500-3.500L13 12l3.500-1.500Z" fill="#b3130e" />
            <circle cx="18" cy="12" r="1.800" fill="#ffd83b" />
          </svg>
        </label>
        {taskbarApps.map((app) => (
          <button key={app.label} aria-label={app.label} className="flex w-11 justify-center">
            <span
              className={`flex h-[38px] w-[38px] flex-col items-center rounded-[4px] pt-[7px] ${app.active ? 'bg-[#edf5fa]' : ''}`}
            >
              <svg viewBox="0 0 24 24" className="size-6">
                {app.art}
              </svg>
              {app.active && <span className="mt-1 h-[3px] w-4 rounded-full bg-[#26809a]" />}
              {app.running && <span className="mt-1 h-[3px] w-[6px] rounded-full bg-[#83898c]" />}
            </span>
          </button>
        ))}
      </div>

      <div className="flex items-center justify-end pr-[18px] leading-4">
        <button aria-label="Hidden icons">
          <ChevronUp className="size-4" />
        </button>
        <svg viewBox="0 0 24 24" className="ml-4 size-4">
          <RunnerArt />
        </svg>
        <svg viewBox="0 0 18 16" className="ml-4 h-4 w-[18px]" fill="none" stroke="#222">
          <path d="M4 13c-4 0-4-6 0-6 1-4 7-5 9-1 5 0 5 7 0 7Z" fill="#d5dadd" />
          <path d="m2 2 14 13" strokeWidth="1.200" />
        </svg>
        <button className="ml-[17px] text-center">
          ENG
          <br />
          IN
        </button>
        <svg viewBox="0 0 18 18" className="ml-[17px] size-[18px]" fill="none" stroke="#222">
          <path d="M11 2.500H2.500c-.6 0-1 .4-1 1v9c0 .6.4 1 1 1H12M7 13.500v3M4 16.500h9M12.500 1.500h4v4h-4ZM14.500 5.500V16" />
        </svg>
        <svg viewBox="0 0 18 16" className="ml-[5px] h-4 w-[18px]" fill="none" stroke="#222">
          <path d="M2 6h2.500L8 2.500v11L4.500 10H2ZM10.500 5.500c1 1.500 1 3.500 0 5" />
          <path d="M12.500 4c2 2.500 2 5.500 0 8M14.500 2.500c3 3.500 3 7.500 0 11" stroke="#aab2b6" />
        </svg>
        <button className="ml-[15px] w-16 text-right">
          14:42
          <br />
          12-12-2025
        </button>
      </div>
    </footer>
  );
}

export default function App() {
  return (
    <div className="flex h-screen flex-col overflow-hidden bg-[#ebeef2] font-['Noto_Sans',sans-serif] text-[#12344d]">
      <TabStrip />
      <AddressBar />
      <div className="flex h-[37px] shrink-0 items-center border-t border-b border-t-[#dfe1e5] border-b-[#fbd9b0] bg-[#fef1e1] pr-4 pl-14">
        <p className="flex-1 text-center text-[13px] font-semibold">
          <a href="#" className="text-[#2c5cc5]">
            Connect your mailbox
          </a>{' '}
          to improve deliverability and enable 2-way sync of email conversations.
        </p>
        <button aria-label="Dismiss" className="text-black">
          <X className="size-4" />
        </button>
      </div>

      <div className="flex min-h-0 flex-1">
        <Sidebar />
        <div className="relative flex min-w-0 flex-1 flex-col">
          <Header />
          <div className="flex min-h-0 flex-1">
            <Content />
            <Scrollbar />
          </div>
          <button
            aria-label="Help"
            className="absolute right-[39px] bottom-10 grid size-9 place-items-center rounded-full bg-[#12344d] text-base font-bold text-white shadow-md"
          >
            ?
          </button>
        </div>
      </div>
      <Taskbar />
    </div>
  );
}
